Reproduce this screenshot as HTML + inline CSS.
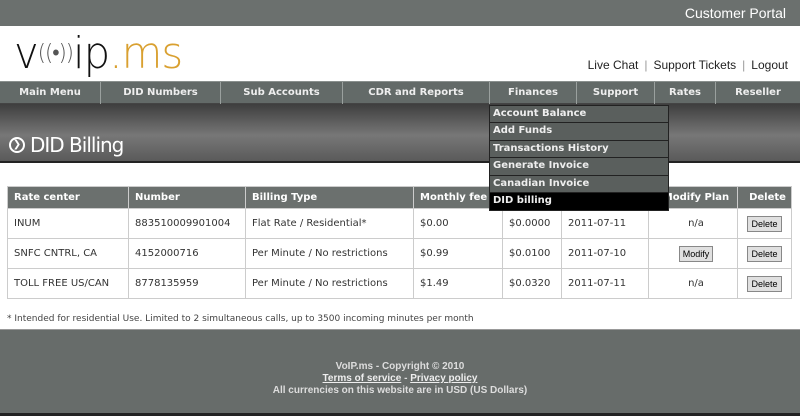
<!DOCTYPE html>
<html><head><style>
*{margin:0;padding:0;box-sizing:border-box}
body{width:800px;height:416px;overflow:hidden;background:#fff;font-family:"DejaVu Sans",Verdana,sans-serif;position:relative}
.top{position:absolute;left:0;top:0;width:800px;height:26px;background:#6b706e;color:#fff;font:14px "Liberation Sans",sans-serif}
.top span{position:absolute;right:14px;top:5px}
.logo{position:absolute;left:14px;top:34px;font:44px/40px "DejaVu Sans",sans-serif;font-weight:200;letter-spacing:-1px;transform:scaleX(0.95);transform-origin:left}
.links{position:absolute;right:12px;top:58px;font:12px "Liberation Sans",sans-serif;color:#222}
.links i{color:#999;font-style:normal;margin:0 6px}
.nav{position:absolute;left:0;top:81px;width:800px;height:23px;background:#636a68;border-top:1px solid #8a908e;border-bottom:1px solid #444}
.nav div{position:absolute;top:0;height:22px;line-height:22px;text-align:center;color:#eee;font-weight:bold;font-size:10px;border-right:1px solid #9aa09e}
.banner{position:absolute;left:0;top:104px;width:800px;height:59px;background:linear-gradient(#3e3e3e,#777 55%,#5a5a5a);border-bottom:2px solid #222}
.banner h1{position:absolute;left:30px;top:29px;font:20px "DejaVu Sans",sans-serif;color:#fff;font-weight:normal;letter-spacing:-1px}
.circ{position:absolute;left:9px;top:33px;width:16px;height:16px;border:2px solid #fff;border-radius:50%;color:#fff;font-size:10px;line-height:12px;text-align:center}
table{position:absolute;left:7px;top:186px;border-collapse:collapse;font-size:10px;color:#333}
th{background:#6b706e;color:#fff;text-align:left;height:22px;padding-left:6px;border:1px solid #ccc}
td{height:30px;padding-left:6px;border:1px solid #ccc}
.btn{display:inline-block;border:1px solid #888;background:#e0e0e0;font:9px "Liberation Sans",sans-serif;padding:2px 3px;color:#000}
.dd{position:absolute;left:489px;top:105px;width:180px;background:#5a5f5d;border:1px solid #222}
.dd div{height:17.4px;line-height:16px;border-bottom:1px solid #222;color:#eee;font-weight:bold;font-size:10px;padding-left:3px}
.dd div.sel{background:#000}
.note{position:absolute;left:7px;top:314px;font-size:9px;color:#444}
.foot{position:absolute;left:0;top:329px;width:800px;height:87px;background:#676c6a;border-bottom:3px solid #222;border-top:1px solid #999;text-align:center;color:#ddd;font:bold 10px/12px "Liberation Sans",sans-serif;padding-top:31px}
.foot u{color:#eee}
</style></head><body>
<div class="top"><span>Customer Portal</span></div>
<div class="logo"><span style="color:#111">v<span style="font-size:22px;vertical-align:8px;color:#555">((•))</span>ip</span><span style="color:#d9a030">.ms</span></div>
<div class="links">Live Chat<i>|</i>Support Tickets<i>|</i>Logout</div>
<div class="nav">
<div style="left:0;width:101px">Main Menu</div>
<div style="left:101px;width:120px">DID Numbers</div>
<div style="left:221px;width:122px">Sub Accounts</div>
<div style="left:343px;width:147px">CDR and Reports</div>
<div style="left:490px;width:87px">Finances</div>
<div style="left:577px;width:78px">Support</div>
<div style="left:655px;width:61px">Rates</div>
<div style="left:716px;width:84px;border:0">Reseller</div>
</div>
<div class="banner"><div class="circ">❯</div><h1>DID Billing</h1></div>
<table>
<tr><th style="width:121px">Rate center</th><th style="width:117px">Number</th><th style="width:168px">Billing Type</th><th style="width:89px">Monthly fee</th><th style="width:59px"></th><th style="width:87px"></th><th style="width:89px;text-align:center">Modify Plan</th><th style="width:54px;text-align:center">Delete</th></tr>
<tr><td>INUM</td><td>883510009901004</td><td>Flat Rate / Residential*</td><td>$0.00</td><td>$0.0000</td><td>2011-07-11</td><td style="text-align:center">n/a</td><td style="text-align:center;padding:0"><span class="btn">Delete</span></td></tr>
<tr><td>SNFC CNTRL, CA</td><td>4152000716</td><td>Per Minute / No restrictions</td><td>$0.99</td><td>$0.0100</td><td>2011-07-10</td><td style="text-align:center"><span class="btn">Modify</span></td><td style="text-align:center;padding:0"><span class="btn">Delete</span></td></tr>
<tr><td>TOLL FREE US/CAN</td><td>8778135959</td><td>Per Minute / No restrictions</td><td>$1.49</td><td>$0.0320</td><td>2011-07-11</td><td style="text-align:center">n/a</td><td style="text-align:center;padding:0"><span class="btn">Delete</span></td></tr>
</table>
<div class="dd"><div>Account Balance</div><div>Add Funds</div><div>Transactions History</div><div>Generate Invoice</div><div>Canadian Invoice</div><div class="sel" style="border:0">DID billing</div></div>
<div class="note">* Intended for residential Use. Limited to 2 simultaneous calls, up to 3500 incoming minutes per month</div>
<div class="foot">VoIP.ms - Copyright © 2010<br><u>Terms of service</u> - <u>Privacy policy</u><br>All currencies on this website are in USD (US Dollars)</div>
</body></html>
